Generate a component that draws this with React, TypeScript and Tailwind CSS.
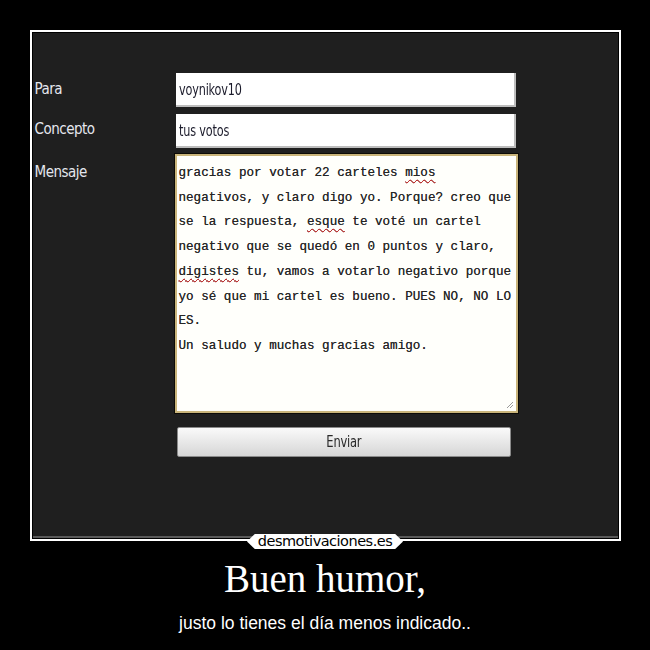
const labelFont = "[font-family:'DejaVu_Sans_Condensed','DejaVu_Sans',sans-serif]";

function Misspelled({ children }: { children: string }) {
  return (
    <span className="underline decoration-wavy decoration-[#d02020] decoration-1 underline-offset-[3px]">
      {children}
    </span>
  );
}

function MessageBox() {
  return (
    <div className="relative h-[259px] w-[343px] border-2 border-[#c9b47a] bg-[#fffffb] shadow-[0_0_0_1px_#0d0b06]">
      <div className="pl-[2px] pt-[5px] font-['Liberation_Mono',monospace] text-[12.6px] leading-[24.7px] text-[#262626] [text-shadow:0_0_0.4px_#555]">
        <div>
          gracias por votar 22 carteles <Misspelled>mios</Misspelled>
        </div>
        <div>negativos, y claro digo yo. Porque? creo que</div>
        <div>
          se la respuesta, <Misspelled>esque</Misspelled> te voté un cartel
        </div>
        <div>negativo que se quedó en 0 puntos y claro,</div>
        <div>
          <Misspelled>digistes</Misspelled> tu, vamos a votarlo negativo porque
        </div>
        <div>yo sé que mi cartel es bueno. PUES NO, NO LO</div>
        <div>ES.</div>
        <div>Un saludo y muchas gracias amigo.</div>
      </div>
      {/* resize grip */}
      <svg className="absolute bottom-[2px] right-[2px]" width="8" height="8" viewBox="0 0 8 8">
        <path d="M7 1 L1 7 M7 4 L4 7" stroke="#9a9a9a" strokeWidth="1" />
      </svg>
    </div>
  );
}

function Field({ value }: { value: string }) {
  return (
    <div className="flex h-[34px] w-[340px] items-center overflow-hidden bg-white pl-[3px] shadow-[inset_-2px_-2px_0_#bdbdbd]">
      <span className="inline-block origin-left scale-x-[0.78] text-[16px] tracking-[-0.2px] text-[#1a1a2a]">
        {value}
      </span>
    </div>
  );
}

export default function App() {
  return (
    <div className="flex h-[650px] w-[650px] flex-col items-center bg-black pt-[30px]">
      {/* Poster frame */}
      <div className="relative h-[511px] w-[591px] border-2 border-white bg-black p-[1px]">
        <div className="flex h-full flex-col bg-[#1f1f1f] shadow-[inset_0_-2px_0_#5a5a5a]">
          <div className={`grid grid-cols-[141px_auto] gap-y-[6px] pl-[2px] pt-[40px] ${labelFont}`}>
            <div className="pt-[5px] text-[15px] tracking-[-0.5px] text-[#e4e6ee]">Para</div>
            <Field value="voynikov10" />

            <div className="pt-[5px] text-[15px] tracking-[-0.5px] text-[#e4e6ee]">Concepto</div>
            <div className="mt-[1px]">
              <Field value="tus votos" />
            </div>

            <div className="pt-[7px] text-[15px] tracking-[-0.5px] text-[#e4e6ee]">Mensaje</div>
            <div className="-ml-[1px]">
              <MessageBox />
            </div>

            <div />
            <button className="ml-[1px] mt-[8px] h-[30px] w-[334px] rounded-[2px] border border-[#8a8a8a] bg-gradient-to-b from-[#fafafa] to-[#d6d6d6] text-[#2a2a2a]">
              <span className="inline-block scale-x-[0.8] text-[16px] tracking-[-0.3px]">Enviar</span>
            </button>
          </div>
        </div>

        {/* site badge on the bottom edge */}
        <div className="absolute bottom-[-10px] left-1/2 flex h-[15px] w-[156px] -translate-x-1/2 items-center justify-center bg-white [clip-path:polygon(5%_0,95%_0,100%_50%,95%_100%,5%_100%,0_50%)]">
          <span className="font-['DejaVu_Sans',sans-serif] text-[14.5px] leading-none tracking-[-0.5px] text-black">
            desmotivaciones.es
          </span>
        </div>
      </div>

      <div className="mt-[18px] font-['Liberation_Serif',serif] text-[39px] leading-none text-white">
        Buen humor,
      </div>
      <div className="mt-[12px] font-['Liberation_Sans',sans-serif] text-[17.5px] text-white">
        justo lo tienes el día menos indicado..
      </div>
    </div>
  );
}
